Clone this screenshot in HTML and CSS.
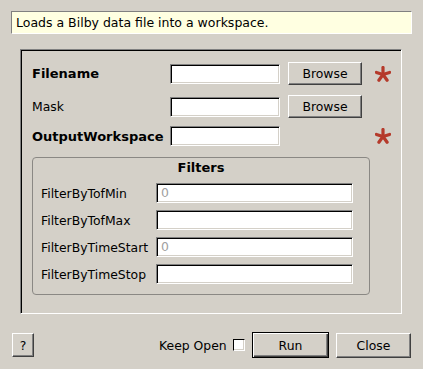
FILE: index.html
```html
<!DOCTYPE html>
<html>
<head>
<meta charset="utf-8">
<link rel="stylesheet" href="styles.css">
</head>
<body>
<div class="dialog">
  <div class="desc">Loads a Bilby data file into a workspace.</div>
  <div class="frame">
    <div class="row row1">
      <span class="label bold">Filename</span>
      <span class="input"></span>
      <button class="btn browse">Browse</button>
      <svg class="star" width="16" height="16" viewBox="0 0 16 16"><g stroke="#b53a2b" stroke-width="3.2" stroke-linecap="round"><line x1="8" y1="8.5" x2="8" y2="1.5"/><line x1="8" y1="8.5" x2="14.6" y2="6.4"/><line x1="8" y1="8.5" x2="12.1" y2="14.2"/><line x1="8" y1="8.5" x2="3.9" y2="14.2"/><line x1="8" y1="8.5" x2="1.4" y2="6.4"/></g></svg>
    </div>
    <div class="row row2">
      <span class="label">Mask</span>
      <span class="input"></span>
      <button class="btn browse">Browse</button>
    </div>
    <div class="row row3">
      <span class="label bold">OutputWorkspace</span>
      <span class="input"></span>
      <span class="spacer"></span>
      <svg class="star" width="16" height="16" viewBox="0 0 16 16"><g stroke="#b53a2b" stroke-width="3.2" stroke-linecap="round"><line x1="8" y1="8.5" x2="8" y2="1.5"/><line x1="8" y1="8.5" x2="14.6" y2="6.4"/><line x1="8" y1="8.5" x2="12.1" y2="14.2"/><line x1="8" y1="8.5" x2="3.9" y2="14.2"/><line x1="8" y1="8.5" x2="1.4" y2="6.4"/></g></svg>
    </div>
    <div class="group">
      <div class="group-title">Filters</div>
      <div class="frow"><span class="flabel">FilterByTofMin</span><span class="finput ph">0</span></div>
      <div class="frow"><span class="flabel">FilterByTofMax</span><span class="finput"></span></div>
      <div class="frow"><span class="flabel">FilterByTimeStart</span><span class="finput ph">0</span></div>
      <div class="frow"><span class="flabel">FilterByTimeStop</span><span class="finput"></span></div>
    </div>
  </div>
  <div class="bottom">
    <button class="btn help">?</button>
    <span class="keep">Keep Open</span>
    <span class="check"></span>
    <button class="btn run">Run</button>
    <button class="btn close">Close</button>
  </div>
</div>
</body>
</html>
```
FILE: styles.css
```css
html, body {
  margin: 0;
  padding: 0;
  background: #d4d0c8;
}
body {
  width: 423px;
  height: 369px;
  overflow: hidden;
  font-family: "DejaVu Sans", sans-serif;
  font-size: 12.4px;
  color: #000;
}
.dialog {
  display: flex;
  flex-direction: column;
  padding-top: 11px;
}
.desc {
  box-sizing: border-box;
  margin-left: 11px;
  width: 401px;
  height: 23px;
  background: #ffffe1;
  border-top: 1px solid #808080;
  border-left: 1px solid #808080;
  border-right: 1px solid #ffffff;
  border-bottom: 1px solid #ffffff;
  padding-left: 4px;
  line-height: 21px;
  white-space: nowrap;
  font-size: 12.5px;
}
.frame {
  box-sizing: border-box;
  margin-top: 15px;
  margin-left: 20px;
  width: 382px;
  height: 265px;
  border-style: solid;
  border-width: 1px;
  border-color: #808080 #ffffff #ffffff #808080;
  box-shadow: inset 1px 1px 0 #000;
  padding: 12px 0 0 11px;
  display: flex;
  flex-direction: column;
}
.row {
  display: flex;
  align-items: center;
}
.row1, .row2 { height: 23px; }
.row2 { margin-top: 10px; }
.row3 { height: 20px; margin-top: 8px; }
.label {
  width: 138px;
  white-space: nowrap;
}
.bold { font-weight: bold; font-size: 13px; }
.input {
  box-sizing: border-box;
  width: 110px;
  height: 20px;
  background: #fff;
  border-style: solid;
  border-width: 1px;
  border-color: #808080 #ffffff #ffffff #808080;
  box-shadow: inset 1px 1px 0 #000, inset -1px -1px 0 #d4d0c8;
}
.spacer { width: 82px; }
.btn {
  box-sizing: border-box;
  font-family: "DejaVu Sans", sans-serif;
  font-size: 12.4px;
  color: #000;
  background: #d4d0c8;
  border-style: solid;
  border-width: 1px;
  border-color: #ffffff #404040 #404040 #ffffff;
  box-shadow: inset -1px -1px 0 #808080;
  padding: 0;
  margin: 0;
}
.browse {
  width: 74px;
  height: 23px;
  margin-left: 8px;
}
.star {
  margin-left: 13px;
  flex: none;
}
.group {
  box-sizing: border-box;
  margin-top: 11px;
  width: 338px;
  height: 138px;
  border: 1px solid #8a8884;
  border-radius: 4px;
  padding: 0 0 0 8px;
  display: flex;
  flex-direction: column;
}
.group-title {
  font-weight: bold;
  font-size: 13px;
  text-align: center;
  height: 25px;
  line-height: 20px;
  margin-left: -8px;
}
.frow {
  display: flex;
  align-items: center;
  height: 20px;
  margin-bottom: 7px;
}
.flabel {
  width: 115px;
  white-space: nowrap;
}
.finput {
  box-sizing: border-box;
  width: 197px;
  height: 20px;
  background: #fff;
  border-style: solid;
  border-width: 1px;
  border-color: #808080 #ffffff #ffffff #808080;
  box-shadow: inset 1px 1px 0 #000, inset -1px -1px 0 #d4d0c8;
  padding-left: 4px;
  line-height: 18px;
}
.ph { color: #a0a0a0; }
.bottom {
  display: flex;
  align-items: center;
  margin-top: 18px;
  height: 26px;
}
.help {
  width: 22px;
  height: 24px;
  margin-left: 12px;
}
.keep {
  margin-left: 125px;
  width: 74px;
  white-space: nowrap;
}
.check {
  box-sizing: border-box;
  width: 12px;
  height: 12px;
  background: #fff;
  border-style: solid;
  border-width: 1px;
  border-color: #000 #fff #fff #000;
  box-shadow: inset -1px -1px 0 #d4d0c8;
}
.run {
  width: 77px;
  height: 26px;
  margin-left: 7px;
  border: 1px solid #000;
  box-shadow: inset 1px 1px 0 #fff, inset -1px -1px 0 #404040, inset -2px -2px 0 #808080;
}
.close {
  width: 75px;
  height: 25px;
  margin-left: 7px;
}
```
